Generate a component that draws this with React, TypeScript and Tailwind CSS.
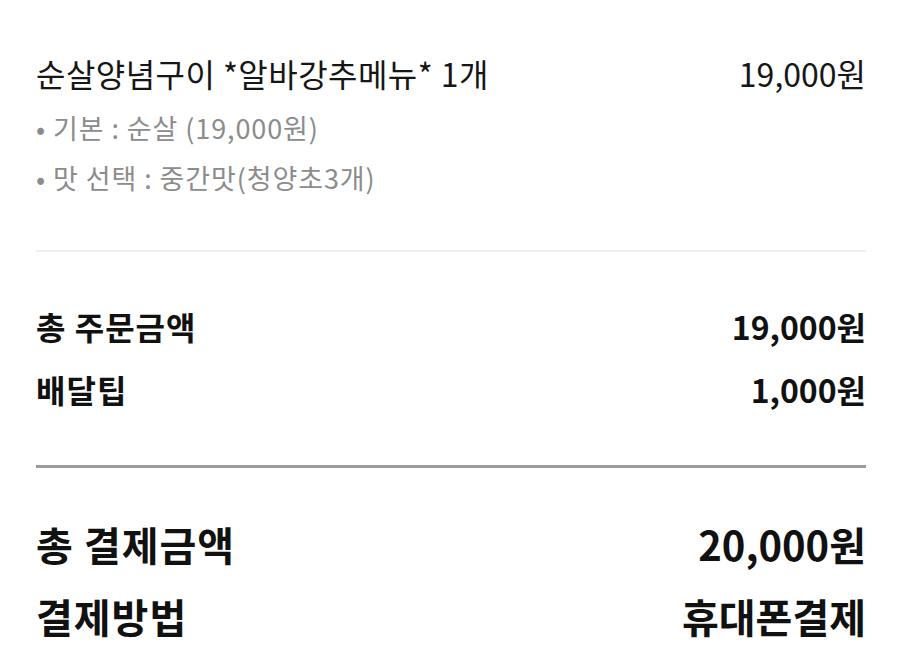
const font = { fontFamily: '"Noto Sans CJK KR", "Noto Sans", sans-serif' };

function Row({ label, value, big }: { label: string; value: string; big?: boolean }) {
  return (
    <div
      className={
        big
          ? "flex items-center justify-between h-[52px] text-[40px] font-bold leading-none text-[#111]"
          : "flex items-center justify-between h-[44px] text-[32px] font-bold leading-none text-[#111]"
      }
    >
      <span className="tracking-[1px]">{label}</span>
      <span>{value}</span>
    </div>
  );
}

export default function App() {
  return (
    <div className="w-[900px] h-[670px] bg-white overflow-hidden" style={font}>
      <div className="pl-[36px] pr-[34px] pt-[51px]">
        {/* 메뉴 */}
        <div className="flex items-center justify-between h-[44px] text-[32px] text-[#161616]">
          <span className="tracking-[0.45px]">순살양념구이 *알바강추메뉴* 1개</span>
          <span>19,000원</span>
        </div>
        <div className="mt-[8px] text-[27px] tracking-[0.9px] text-[#8c8c8c]">
          <div className="h-[50px] flex items-center">• 기본 : 순살 (19,000원)</div>
          <div className="h-[50px] flex items-center">• 맛 선택 : 중간맛(청양초3개)</div>
        </div>

        <div className="mt-[47px] h-[2px] bg-[#eeeeee]" />

        {/* 금액 */}
        <div className="pt-[52px] flex flex-col gap-[19px]">
          <Row label="총 주문금액" value="19,000원" />
          <Row label="배달팁" value="1,000원" />
        </div>

        <div className="mt-[54px] h-[3px] bg-[#9b9b9b]" />

        <div className="pt-[50px] flex flex-col gap-[20px]">
          <Row big label="총 결제금액" value="20,000원" />
          <Row big label="결제방법" value="휴대폰결제" />
        </div>
      </div>
    </div>
  );
}
